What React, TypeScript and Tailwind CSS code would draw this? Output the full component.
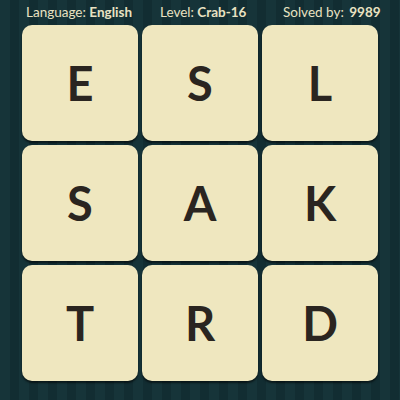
const letters = ['E', 'S', 'L', 'S', 'A', 'K', 'T', 'R', 'D'];

export default function App() {
  return (
    <div
      className="w-[400px] h-[400px] overflow-hidden bg-[#153237] bg-[repeating-linear-gradient(90deg,#163439_0px,#163439_10px,#122d32_10px,#122d32_19px)]"
      style={{ fontFamily: 'Lato, "Open Sans", sans-serif' }}
    >
      <div className="h-[25px] flex items-center text-[13.5px] text-[#e9e2c2] pl-[26px] pb-[1px]">
        <span className="w-[134px]">
          Language: <span className="font-bold">English</span>
        </span>
        <span className="w-[123px]">
          Level: <span className="font-bold">Crab-16</span>
        </span>
        <span>
          Solved by: <span className="font-bold ml-[2px]">9989</span>
        </span>
      </div>
      <div className="grid grid-cols-[repeat(3,116px)] auto-rows-[116px] gap-[4px] pl-[22px]">
        {letters.map((l, i) => (
          <div
            key={i}
            className="rounded-[10px] bg-[#efe7bf] flex items-center justify-center shadow-[0_2px_2px_rgba(0,0,0,0.55)]"
          >
            <span className="text-[47px] font-bold text-[#2a2520] leading-none">{l}</span>
          </div>
        ))}
      </div>
    </div>
  );
}
